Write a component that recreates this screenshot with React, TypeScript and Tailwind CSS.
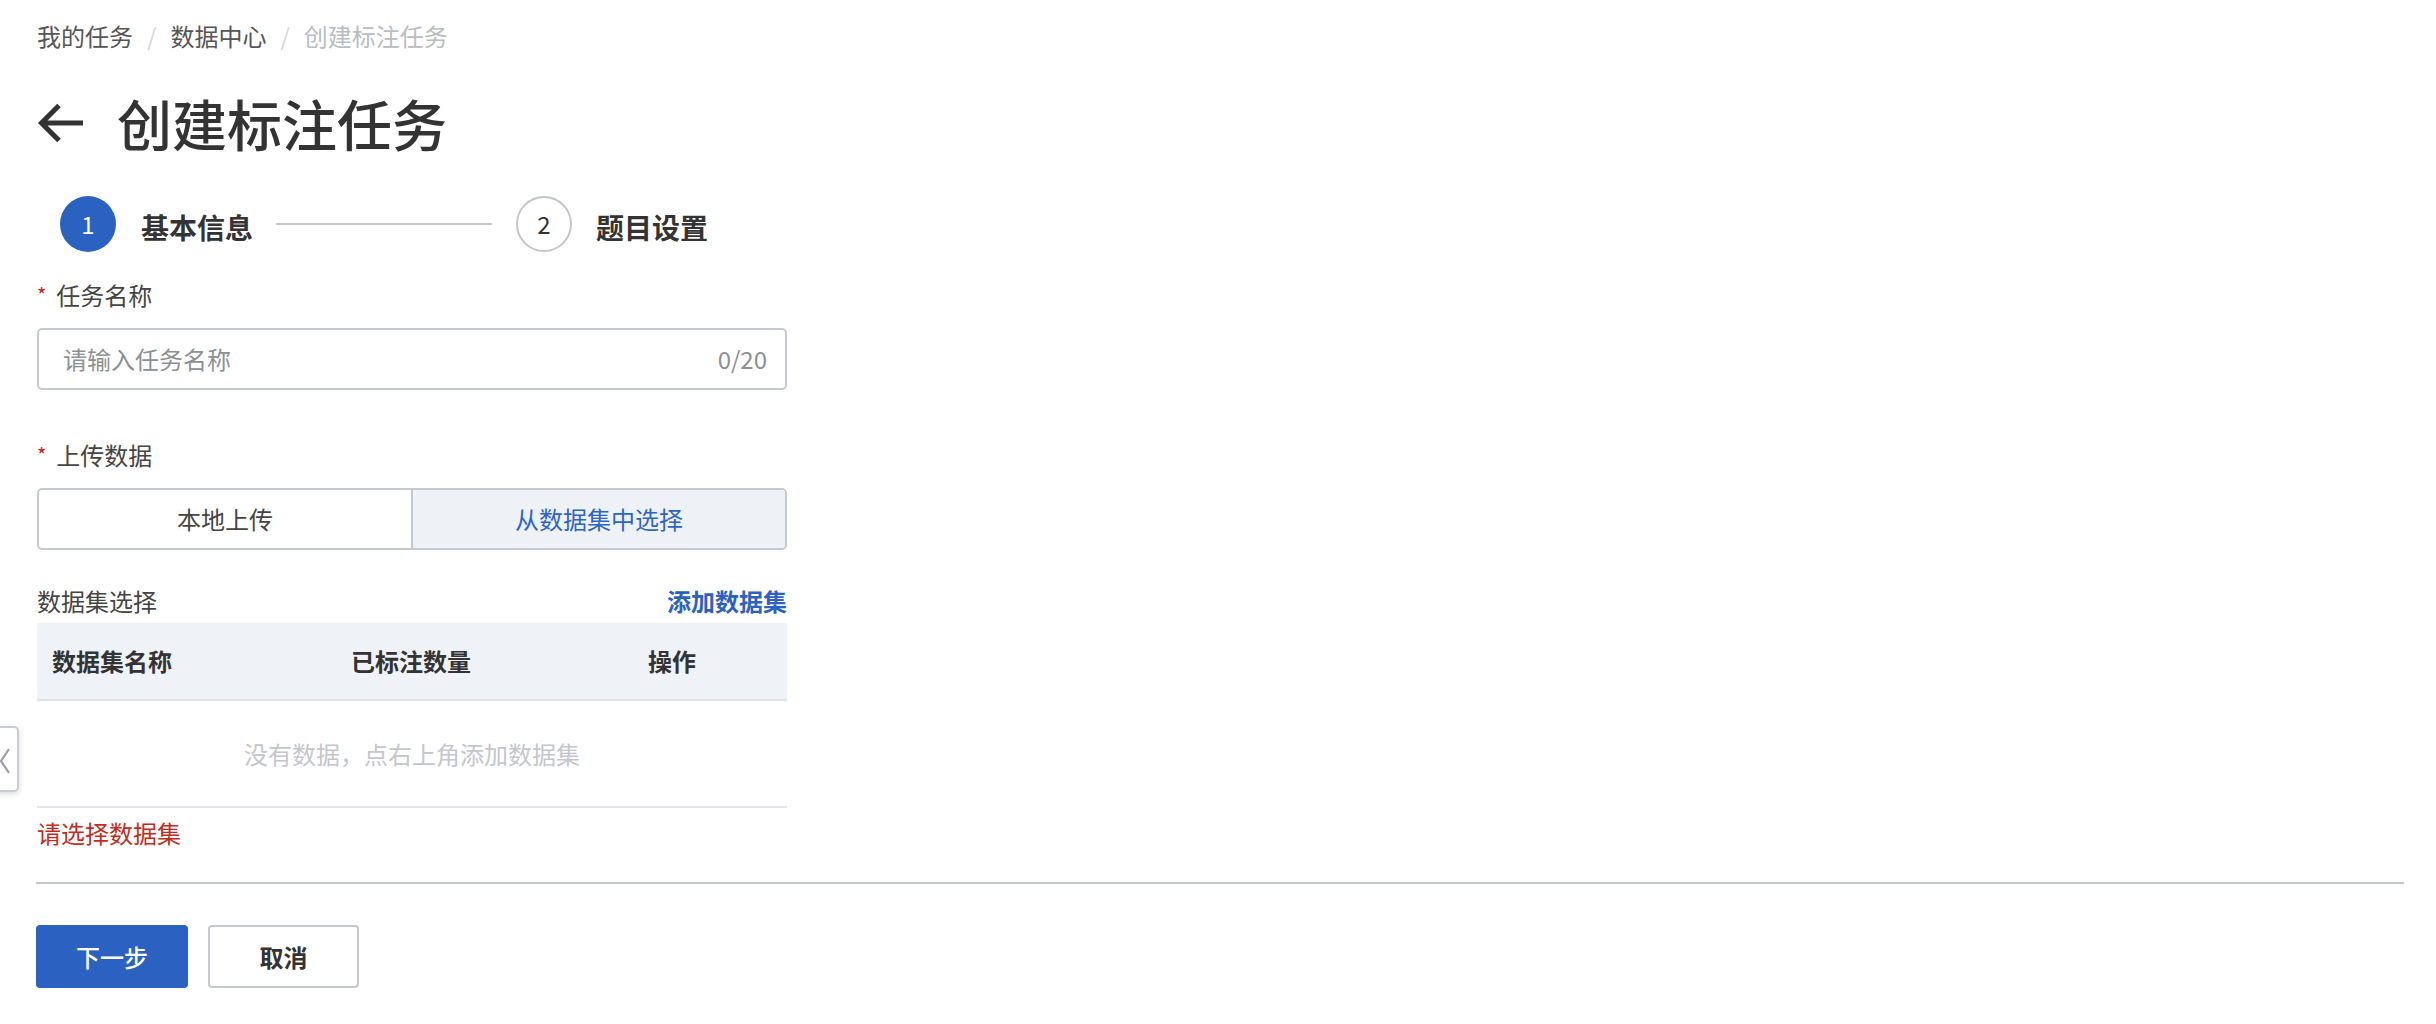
import React from "react";

export default function App() {
  return (
    <div className="relative min-h-screen bg-white font-['Noto_Sans_CJK_SC','Noto_Sans',sans-serif] text-[#333]">
      {/* collapse handle */}
      <div className="absolute left-[-21px] top-[726px] h-[66px] w-[40px] rounded-[5px] border-2 border-[#c9cdd2] bg-white shadow-[0_2px_6px_rgba(0,0,0,0.15)]">
        <svg className="absolute left-[19px] top-[20px]" width="12" height="26" viewBox="0 0 12 26">
          <path d="M9 1 L1 13 L9 25" fill="none" stroke="#9a9ea4" strokeWidth="2.2" />
        </svg>
      </div>

      <div className="pl-[37px] pr-[32px] pt-[20px]">
        {/* breadcrumb */}
        <div className="flex h-[32px] items-center text-[24px] leading-[32px]">
          <span className="text-[#555]">我的任务</span>
          <span className="mx-[14px] text-[#d5d7da]">/</span>
          <span className="text-[#555]">数据中心</span>
          <span className="mx-[14px] text-[#d5d7da]">/</span>
          <span className="text-[#b9bcc0]">创建标注任务</span>
        </div>

        {/* title */}
        <div className="mt-[38px] flex h-[64px] items-center">
          <svg width="48" height="40" viewBox="0 0 48 40" className="mt-[2px]">
            <path d="M46 20H5 M22 2.5 L4.5 20 L22 37.5" fill="none" stroke="#333" strokeWidth="5" />
          </svg>
          <h1 className="ml-[32px] text-[55px] font-medium leading-[64px] text-[#333]">创建标注任务</h1>
        </div>

        {/* steps */}
        <div className="mt-[42px] flex h-[56px] items-center pl-[23px]">
          <div className="flex h-[56px] w-[56px] items-center justify-center rounded-full bg-[#2b62c1] text-[24px] text-white">1</div>
          <span className="ml-[25px] mt-[6px] text-[28px] font-bold leading-[36px] text-[#333]">基本信息</span>
          <div className="ml-[23px] h-[2px] w-[216px] bg-[#c3c7cc]" />
          <div className="ml-[24px] flex h-[56px] w-[56px] items-center justify-center rounded-full border-2 border-[#c3c7cc] text-[24px] text-[#333]">2</div>
          <span className="ml-[24px] mt-[6px] text-[28px] font-bold leading-[36px] text-[#333]">题目设置</span>
        </div>

        {/* form */}
        <div className="w-[750px]">
          <div className="mt-[27px] flex h-[32px] items-center text-[24px] leading-[32px] text-[#444]">
            <span className="mr-[10px] text-[20px] text-[#c8201a]">*</span>
            <span>任务名称</span>
          </div>
          <div className="mt-[17px] flex h-[62px] items-center justify-between rounded-[5px] border-2 border-[#c5c9ce] pl-[24px] pr-[18px] text-[24px]">
            <span className="text-[#8c8f94]">请输入任务名称</span>
            <span className="text-[#8c8f94]">0/20</span>
          </div>

          <div className="mt-[49px] flex h-[32px] items-center text-[24px] leading-[32px] text-[#444]">
            <span className="mr-[10px] text-[20px] text-[#c8201a]">*</span>
            <span>上传数据</span>
          </div>
          <div className="mt-[17px] flex h-[62px] overflow-hidden rounded-[5px] border-2 border-[#c5c9ce] text-[24px]">
            <div className="flex flex-1 items-center justify-center text-[#444]">本地上传</div>
            <div className="flex flex-1 items-center justify-center border-l-2 border-[#c5c9ce] bg-[#eef1f6] text-[#2c64c4]">从数据集中选择</div>
          </div>

          <div className="mt-[35px] flex h-[32px] items-center justify-between text-[24px] leading-[32px]">
            <span className="text-[#444]">数据集选择</span>
            <span className="font-bold text-[#2b62c1]">添加数据集</span>
          </div>

          <div className="mt-[6px]">
            <div className="flex h-[78px] items-center border-b-2 border-[#dfe2e6] bg-[#eff2f7] text-[24px] font-bold text-[#333]">
              <div className="w-[299px] pl-[15px]">数据集名称</div>
              <div className="w-[297px] pl-[15px]">已标注数量</div>
              <div className="flex-1 pl-[15px]">操作</div>
            </div>
            <div className="flex h-[107px] items-center justify-center border-b-2 border-[#e4e6ea] text-[24px] text-[#c3c6cb]">
              没有数据，点右上角添加数据集
            </div>
          </div>

          <div className="mt-[9px] h-[32px] text-[24px] leading-[32px] text-[#c42b1c]">请选择数据集</div>
        </div>

        {/* divider */}
        <div className="ml-[-1px] mt-[33px] h-[2px] bg-[#c4c8cc]" />

        {/* buttons */}
        <div className="mt-[41px] flex gap-[20px]">
          <button className="ml-[-1px] flex h-[63px] w-[152px] items-center justify-center rounded-[4px] bg-[#2b62c1] text-[24px] font-medium text-white">
            下一步
          </button>
          <button className="flex h-[63px] w-[151px] items-center justify-center rounded-[4px] border-2 border-[#c5c9ce] bg-white text-[24px] font-bold text-[#333]">
            取消
          </button>
        </div>
      </div>
    </div>
  );
}
